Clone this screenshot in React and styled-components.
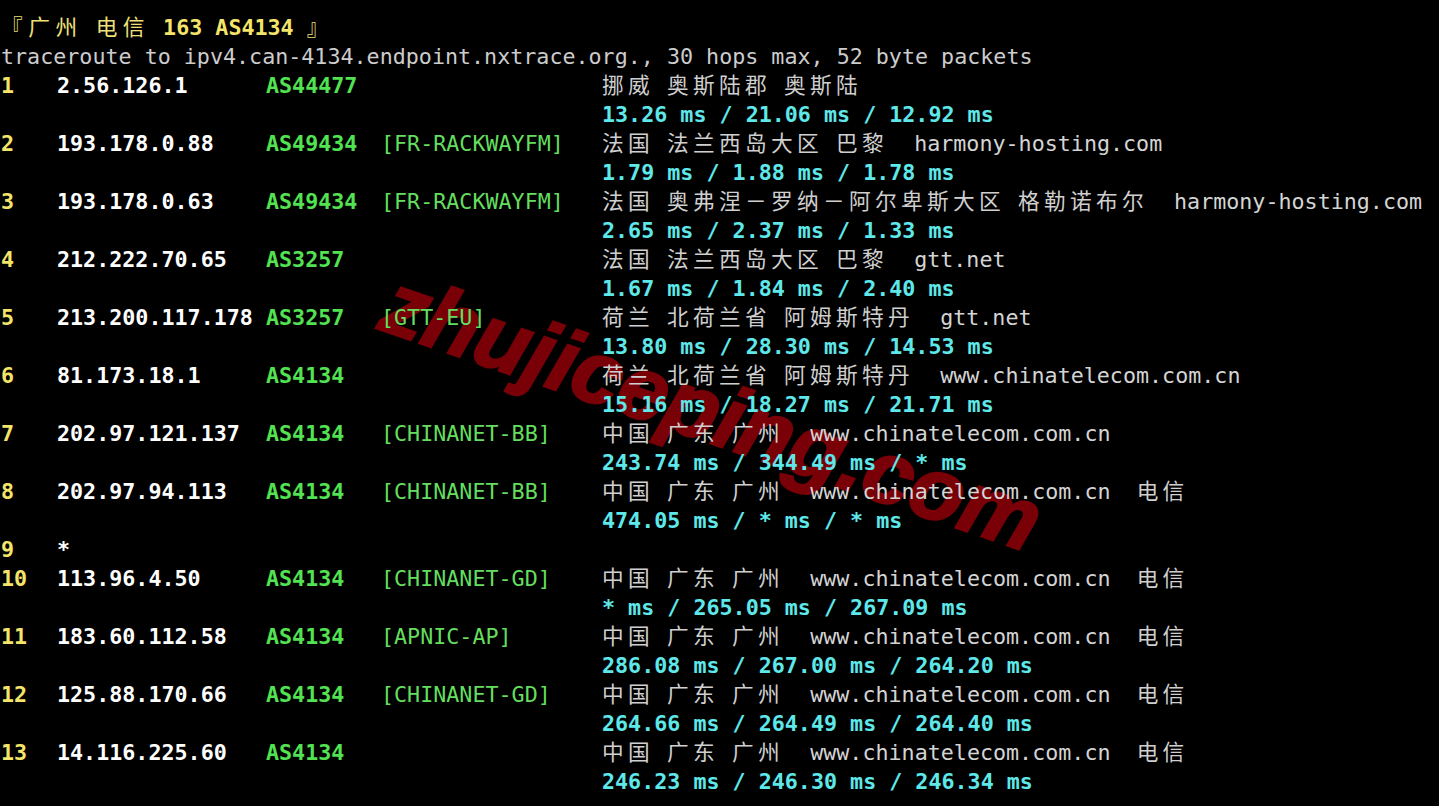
import React from "react";
import styled, { createGlobalStyle } from "styled-components";

const GlobalStyle = createGlobalStyle`
  html, body {
    margin: 0;
    padding: 0;
    background: #000;
  }
`;

const Terminal = styled.div`
  position: relative;
  overflow: hidden;
  min-height: 100vh;
  box-sizing: border-box;
  padding: 13px 0 0 1px;
  background: #000;
  font-family: "DejaVu Sans Mono", "Liberation Mono", monospace;
  font-size: 21.7px;
  color: #cccccc;
  white-space: pre;
`;

const Content = styled.div`
  position: relative;
`;

const Line = styled.div`
  height: 29px;
  line-height: 29px;
  color: ${(p) => p.color || "#cccccc"};
`;

const Hop = styled.div`
  display: grid;
  grid-template-columns: 56px 209px 115px 221px 1fr;
  grid-auto-rows: 29px;
  line-height: 29px;
`;

const Num = styled.span`
  color: #f4e56a;
  font-weight: bold;
`;

const Ip = styled.span`
  color: #ffffff;
  font-weight: bold;
`;

const Asn = styled.span`
  color: #52e252;
  font-weight: bold;
`;

const Label = styled.span`
  color: #64de5e;
`;

const Detail = styled.span`
  grid-column: 5;
  color: #d4d4d4;
`;

const Ms = styled.span`
  grid-column: 5;
  color: #5ee8ea;
  font-weight: bold;
`;

const Cjk = styled.span`
  font-family: "Noto Sans CJK SC", sans-serif;
  font-weight: 400;
  letter-spacing: ${(p) => p.$spacing ?? 4.3}px;
  color: ${(p) => p.$color || "#cfcfcf"};
  line-height: 0;
`;

const Bold = styled.span`
  font-weight: bold;
`;

const Watermark = styled.div`
  position: absolute;
  left: 712px;
  top: 412px;
  transform: translate(-50%, -50%) rotate(19deg);
  font-family: "Liberation Sans", Arial, sans-serif;
  font-weight: bold;
  font-style: italic;
  font-size: 88px;
  color: #7a0008;
  -webkit-text-stroke: 2.5px #7a0008;
  white-space: nowrap;
  line-height: 1;
`;

const CJK_RUN = /[\u3000-\u303f\u3400-\u9fff\uff00-\uffef]+|[^\u3000-\u303f\u3400-\u9fff\uff00-\uffef]+/g;
const IS_CJK = /[\u3000-\u303f\u3400-\u9fff\uff00-\uffef]/;

function Mixed({ text, color, spacing }) {
  return (
    <>
      {(text.match(CJK_RUN) || []).map((run, i) =>
        IS_CJK.test(run) ? (
          <Cjk key={i} $color={color} $spacing={spacing}>
            {run}
          </Cjk>
        ) : (
          <React.Fragment key={i}>{run}</React.Fragment>
        )
      )}
    </>
  );
}

const GZ = "中国 广东 广州";
const CT = "www.chinatelecom.com.cn";

const hops = [
  { n: "1", ip: "2.56.126.1", as: "AS44477", label: "", geo: "挪威 奥斯陆郡 奥斯陆", host: "", isp: "", ms: "13.26 ms / 21.06 ms / 12.92 ms" },
  { n: "2", ip: "193.178.0.88", as: "AS49434", label: "[FR-RACKWAYFM]", geo: "法国 法兰西岛大区 巴黎", host: "harmony-hosting.com", isp: "", ms: "1.79 ms / 1.88 ms / 1.78 ms" },
  { n: "3", ip: "193.178.0.63", as: "AS49434", label: "[FR-RACKWAYFM]", geo: "法国 奥弗涅－罗纳－阿尔卑斯大区 格勒诺布尔", host: "harmony-hosting.com", isp: "", ms: "2.65 ms / 2.37 ms / 1.33 ms" },
  { n: "4", ip: "212.222.70.65", as: "AS3257", label: "", geo: "法国 法兰西岛大区 巴黎", host: "gtt.net", isp: "", ms: "1.67 ms / 1.84 ms / 2.40 ms" },
  { n: "5", ip: "213.200.117.178", as: "AS3257", label: "[GTT-EU]", geo: "荷兰 北荷兰省 阿姆斯特丹", host: "gtt.net", isp: "", ms: "13.80 ms / 28.30 ms / 14.53 ms" },
  { n: "6", ip: "81.173.18.1", as: "AS4134", label: "", geo: "荷兰 北荷兰省 阿姆斯特丹", host: CT, isp: "", ms: "15.16 ms / 18.27 ms / 21.71 ms" },
  { n: "7", ip: "202.97.121.137", as: "AS4134", label: "[CHINANET-BB]", geo: GZ, host: CT, isp: "", ms: "243.74 ms / 344.49 ms / * ms" },
  { n: "8", ip: "202.97.94.113", as: "AS4134", label: "[CHINANET-BB]", geo: GZ, host: CT, isp: "电信", ms: "474.05 ms / * ms / * ms" },
  { n: "9", ip: "*", as: "", label: "", geo: "", host: "", isp: "", ms: "" },
  { n: "10", ip: "113.96.4.50", as: "AS4134", label: "[CHINANET-GD]", geo: GZ, host: CT, isp: "电信", ms: "* ms / 265.05 ms / 267.09 ms" },
  { n: "11", ip: "183.60.112.58", as: "AS4134", label: "[APNIC-AP]", geo: GZ, host: CT, isp: "电信", ms: "286.08 ms / 267.00 ms / 264.20 ms" },
  { n: "12", ip: "125.88.170.66", as: "AS4134", label: "[CHINANET-GD]", geo: GZ, host: CT, isp: "电信", ms: "264.66 ms / 264.49 ms / 264.40 ms" },
  { n: "13", ip: "14.116.225.60", as: "AS4134", label: "", geo: GZ, host: CT, isp: "电信", ms: "246.23 ms / 246.30 ms / 246.34 ms" },
];

export default function App() {
  return (
    <>
      <GlobalStyle />
      <Terminal>
        <Watermark>zhujiceping.com</Watermark>
        <Content>
          <Line color="#f4e56a">
            <Mixed text="『广州 电信 " color="#efe07a" spacing={5.5} />
            <Bold>163 AS4134 </Bold>
            <Mixed text="』" color="#efe07a" spacing={5.5} />
          </Line>
          <Line>traceroute to ipv4.can-4134.endpoint.nxtrace.org., 30 hops max, 52 byte packets</Line>
          {hops.map((h) => (
            <Hop key={h.n}>
              <Num>{h.n}</Num>
              <Ip>{h.ip}</Ip>
              <Asn>{h.as}</Asn>
              <Label>{h.label}</Label>
              <Detail>
                <Mixed text={[h.geo, h.host, h.isp].filter(Boolean).join("  ")} />
              </Detail>
              {h.ms && <Ms>{h.ms}</Ms>}
            </Hop>
          ))}
        </Content>
      </Terminal>
    </>
  );
}
